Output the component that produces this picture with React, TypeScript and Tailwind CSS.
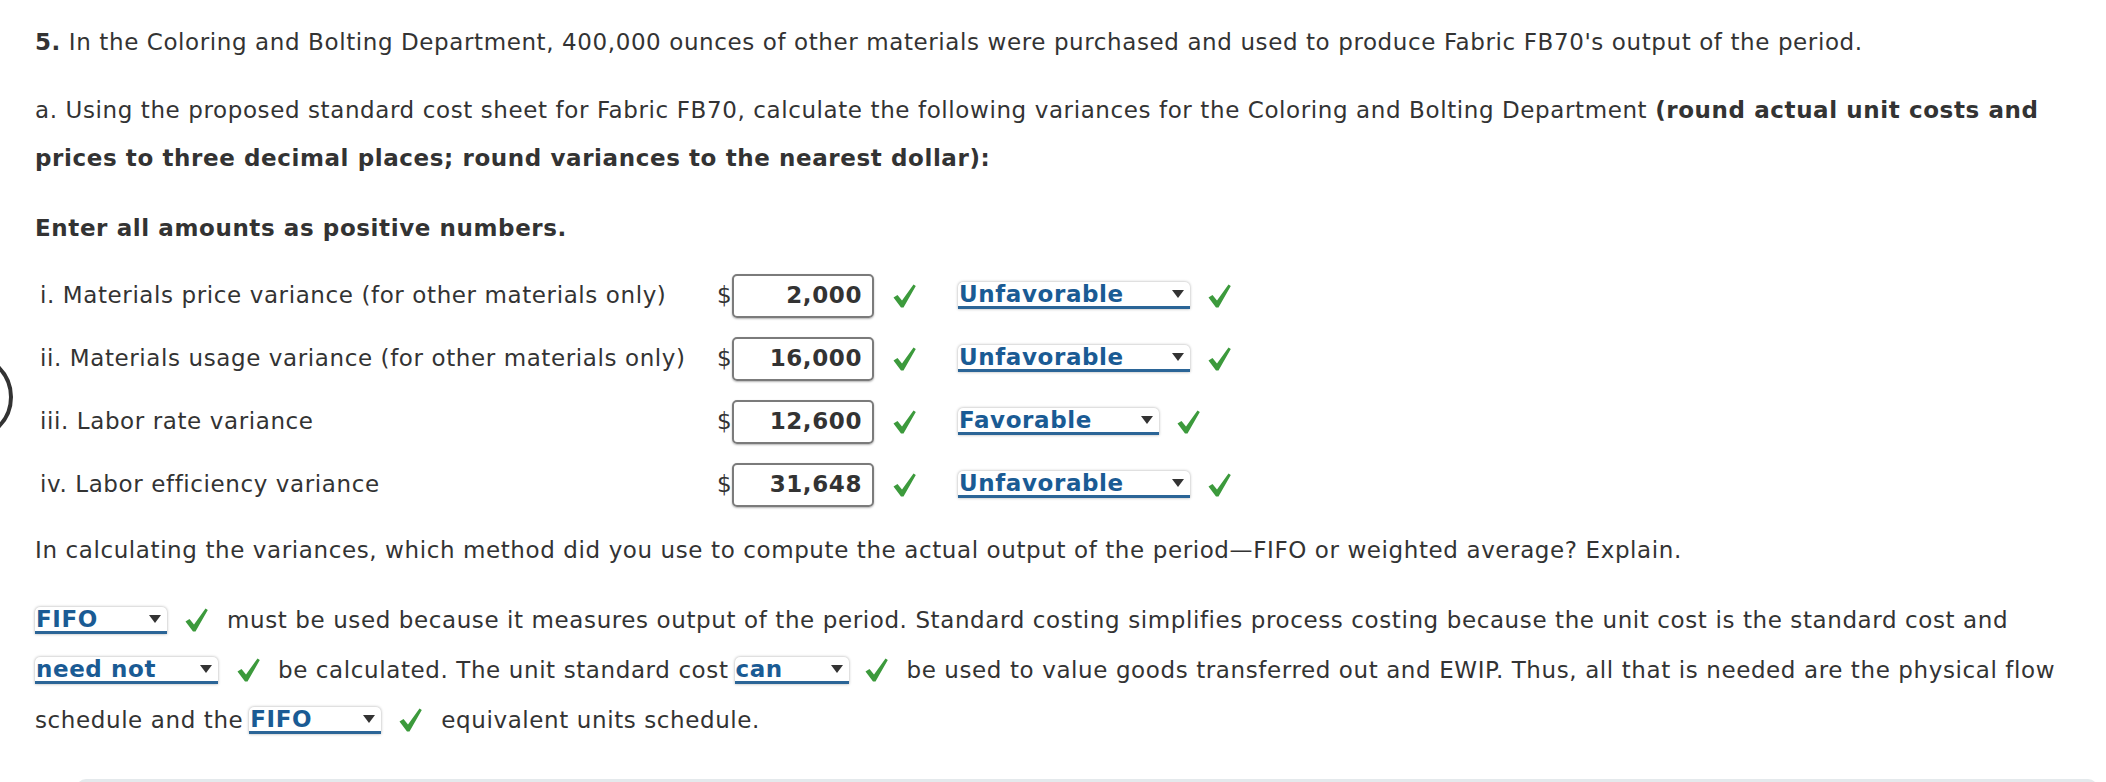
import React from "react";

const Check: React.FC = () => (
  <svg width="23" height="24" viewBox="0 0 23 24" className="shrink-0">
    <path d="M0.5 13.5 L4.5 11 L9 16.5 L20.5 0.5 L22.8 2 L10.5 23.5 L8 23.5 Z" fill="#3c9a3c" />
  </svg>
);

const Select: React.FC<{ value: string; width: string }> = ({ value, width }) => (
  <span
    className={`${width} h-[27px] inline-flex items-center justify-between bg-white rounded-t-[5px] shadow-[0_0_3px_rgba(0,0,0,0.35)] border-b-[3px] border-[#2b6597] font-bold text-[#1a5b94] leading-none shrink-0`}
  >
    <span className="pl-[1px] pt-[1px]">{value}</span>
    <svg width="12" height="8" viewBox="0 0 12 8" className="mr-[6px]">
      <path d="M0 0 H12 L6 8 Z" fill="#333" />
    </svg>
  </span>
);

const rows = [
  { label: "i. Materials price variance (for other materials only)", amount: "2,000", result: "Unfavorable", w: "w-[232px]" },
  { label: "ii. Materials usage variance (for other materials only)", amount: "16,000", result: "Unfavorable", w: "w-[232px]" },
  { label: "iii. Labor rate variance", amount: "12,600", result: "Favorable", w: "w-[201px]" },
  { label: "iv. Labor efficiency variance", amount: "31,648", result: "Unfavorable", w: "w-[232px]" },
];

const App: React.FC = () => {
  return (
    <div className="relative min-h-screen bg-white overflow-hidden font-['DejaVu_Sans','Verdana',sans-serif] text-[23px] tracking-[0.6px] text-[#333]">
      {/* partial circle on the left edge */}
      <svg width="16" height="100" viewBox="0 0 16 100" className="absolute left-0 top-[348px]">
        <circle cx="-31" cy="49" r="42" fill="none" stroke="#333" strokeWidth="4" />
      </svg>

      <div className="pl-[35px] pt-[18px]">
        <p className="leading-[48px] whitespace-nowrap">
          <b>5.</b> In the Coloring and Bolting Department, 400,000 ounces of other materials were purchased and used to produce Fabric FB70's output of the period.
        </p>

        <p className="mt-[20px] leading-[48px] whitespace-nowrap">
          a. Using the proposed standard cost sheet for Fabric FB70, calculate the following variances for the Coloring and Bolting Department <b>(round actual unit costs and</b>
          <br />
          <b>prices to three decimal places; round variances to the nearest dollar):</b>
        </p>

        <p className="mt-[22px] leading-[48px] font-bold">Enter all amounts as positive numbers.</p>

        {/* variance table */}
        <div className="mt-[12px] flex flex-col">
          {rows.map((r) => (
            <div key={r.label} className="h-[63px] flex items-center">
              <span className="w-[682px] pl-[5px] whitespace-nowrap">{r.label}</span>
              <span className="w-[15px]">$</span>
              <span className="w-[142px] h-[44px] flex items-center justify-end pr-[10px] border-2 border-[#7b7b7b] rounded-[5px] shadow-[0_1px_2px_rgba(0,0,0,0.3)] font-bold">
                {r.amount}
              </span>
              <span className="ml-[19px]">
                <Check />
              </span>
              <span className="ml-[42px] flex">
                <Select value={r.result} width={r.w} />
              </span>
              <span className="ml-[18px]">
                <Check />
              </span>
            </div>
          ))}
        </div>

        <p className="mt-[10px] leading-[48px] whitespace-nowrap">
          In calculating the variances, which method did you use to compute the actual output of the period—FIFO or weighted average? Explain.
        </p>

        {/* explanation */}
        <div className="mt-[21px] flex flex-col whitespace-nowrap">
          <div className="h-[50px] flex items-center">
            <Select value="FIFO" width="w-[132px]" />
            <span className="ml-[18px]"><Check /></span>
            <span className="ml-[19px]">must be used because it measures output of the period. Standard costing simplifies process costing because the unit cost is the standard cost and</span>
          </div>
          <div className="h-[50px] flex items-center">
            <Select value="need not" width="w-[183px]" />
            <span className="ml-[19px]"><Check /></span>
            <span className="ml-[18px]">be calculated. The unit standard cost</span>
            <span className="ml-[6px] flex"><Select value="can" width="w-[114px]" /></span>
            <span className="ml-[16px]"><Check /></span>
            <span className="ml-[19px]">be used to value goods transferred out and EWIP. Thus, all that is needed are the physical flow</span>
          </div>
          <div className="h-[50px] flex items-center">
            <span>schedule and the</span>
            <span className="ml-[6px] flex"><Select value="FIFO" width="w-[132px]" /></span>
            <span className="ml-[18px]"><Check /></span>
            <span className="ml-[19px]">equivalent units schedule.</span>
          </div>
        </div>
      </div>

      <div className="mt-[34px] ml-[76px] mr-[8px] h-[40px] rounded-t-[10px] bg-[#e4e9ec]" />
    </div>
  );
};

export default App;
